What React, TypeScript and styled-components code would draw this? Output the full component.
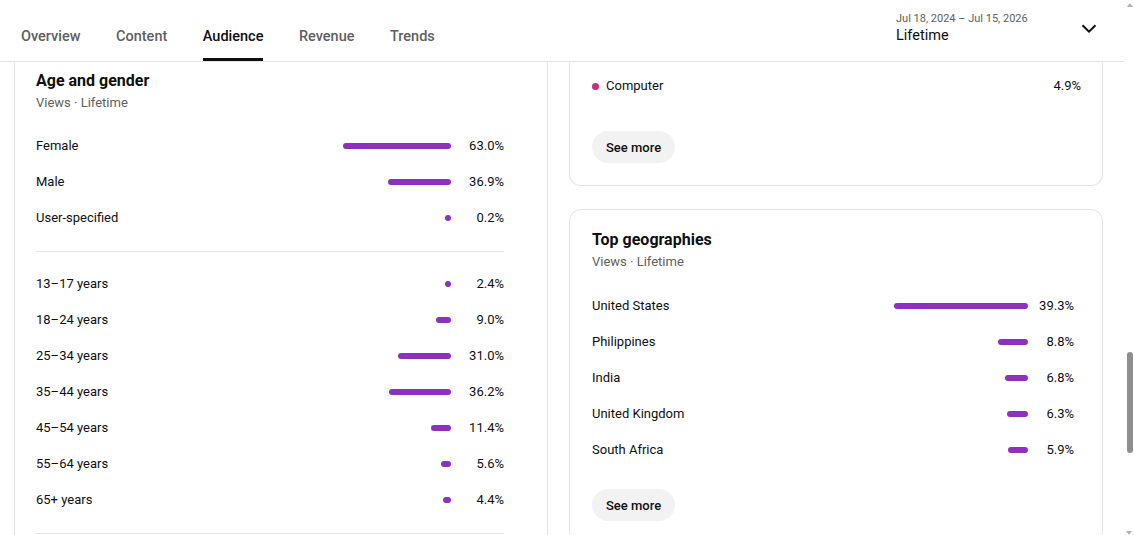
import { ReactElement } from 'react'
import styled, { createGlobalStyle } from 'styled-components'

type BarItem = { label: string; value: number }

const genderRows: BarItem[] = [
  { label: 'Female', value: 63.0 },
  { label: 'Male', value: 36.9 },
  { label: 'User-specified', value: 0.2 },
]

const ageRows: BarItem[] = [
  { label: '13–17 years', value: 2.4 },
  { label: '18–24 years', value: 9.0 },
  { label: '25–34 years', value: 31.0 },
  { label: '35–44 years', value: 36.2 },
  { label: '45–54 years', value: 11.4 },
  { label: '55–64 years', value: 5.6 },
  { label: '65+ years', value: 4.4 },
]

const geographyRows: BarItem[] = [
  { label: 'United States', value: 39.3 },
  { label: 'Philippines', value: 8.8 },
  { label: 'India', value: 6.8 },
  { label: 'United Kingdom', value: 6.3 },
  { label: 'South Africa', value: 5.9 },
]

const tabs = ['Overview', 'Content', 'Audience', 'Revenue', 'Trends']

const GlobalStyle = createGlobalStyle`
  html, body {
    margin: 0;
    height: 100%;
    overflow: hidden;
    background: #ffffff;
  }
  body {
    font-family: Roboto, "Noto Sans", Arial, sans-serif;
    color: #0f0f0f;
    -webkit-font-smoothing: antialiased;
  }
`

type BarListProps = {
  rows: BarItem[]
  scale: number
  valueWidth: number
  padding: string
}

function BarList({ rows, scale, valueWidth, padding }: BarListProps): ReactElement {
  return (
    <List $padding={padding}>
      {rows.map((row) => (
        <BarRow key={row.label} $valueWidth={valueWidth}>
          <RowLabel>{row.label}</RowLabel>
          <Bar style={{ width: Math.max(6, row.value * scale) }} />
          <RowValue>{row.value.toFixed(1)}%</RowValue>
        </BarRow>
      ))}
    </List>
  )
}

function App(): ReactElement {
  return (
    <Page>
      <GlobalStyle />
      <Main>
        <Header>
          <Tabs>
            {tabs.map((tab) => (
              <Tab key={tab} $active={tab === 'Audience'}>
                {tab}
              </Tab>
            ))}
          </Tabs>
          <DatePicker>
            <DateText>
              <DateRange>Jul 18, 2024 – Jul 15, 2026</DateRange>
              <DateLabel>Lifetime</DateLabel>
            </DateText>
            <svg width="24" height="24" viewBox="0 0 24 24" fill="none">
              <path d="M5.5 9.2l6.5 6.5 6.5-6.5" stroke="#0f0f0f" strokeWidth="2" />
            </svg>
          </DatePicker>
        </Header>

        <Content>
          <Card $cutTop $padding="8px 43px 40px 21px">
            <CardTitle>Age and gender</CardTitle>
            <CardSubtitle>Views · Lifetime</CardSubtitle>
            <BarList rows={genderRows} scale={1.714} valueWidth={53} padding="16px 0 15px" />
            <Divider />
            <BarList rows={ageRows} scale={1.714} valueWidth={53} padding="14px 0 15px" />
            <Divider />
          </Card>

          <Column>
            <Card $cutTop $padding="14px 21px 22px 22px">
              <LegendRow>
                <LegendDot $color="#c8307f" />
                <RowLabel>Computer</RowLabel>
                <LegendValue>4.9%</LegendValue>
              </LegendRow>
              <SeeMore type="button">See more</SeeMore>
            </Card>

            <Card $padding="19px 28px 22px 22px">
              <CardTitle>Top geographies</CardTitle>
              <CardSubtitle>Views · Lifetime</CardSubtitle>
              <BarList rows={geographyRows} scale={3.41} valueWidth={46} padding="17px 0 0" />
              <SeeMore type="button" $spaced>
                See more
              </SeeMore>
            </Card>
          </Column>
        </Content>
      </Main>

      <ScrollRail>
        <ScrollArrow $up />
        <ScrollTrack>
          <ScrollThumb />
        </ScrollTrack>
        <ScrollArrow />
      </ScrollRail>
    </Page>
  )
}

export default App

const Page = styled.div`
  display: flex;
  height: 100vh;
  overflow: hidden;
`

const Main = styled.div`
  flex: 1;
  min-width: 0;
  display: flex;
  flex-direction: column;
`

const Header = styled.header`
  height: 61px;
  flex-shrink: 0;
  display: flex;
  justify-content: space-between;
  border-bottom: 1px solid #e5e5e5;
  padding: 0 23px 0 21px;
`

const Tabs = styled.nav`
  display: flex;
  gap: 35.5px;
`

const Tab = styled.div<{ $active?: boolean }>`
  box-sizing: border-box;
  height: 61px;
  padding-top: 27px;
  font-size: 14.5px;
  line-height: 20px;
  font-weight: 500;
  color: ${(p) => (p.$active ? '#0f0f0f' : '#606060')};
  border-bottom: 3px solid ${(p) => (p.$active ? '#0f0f0f' : 'transparent')};
`

const DatePicker = styled.div`
  width: 205px;
  display: flex;
  justify-content: space-between;
  align-items: center;
  padding-bottom: 6px;
`

const DateText = styled.div`
  display: flex;
  flex-direction: column;
  padding-top: 2px;
`

const DateRange = styled.span`
  font-size: 11px;
  line-height: 15px;
  color: #606060;
`

const DateLabel = styled.span`
  font-size: 14.5px;
  line-height: 20px;
  color: #0f0f0f;
`

const Content = styled.main`
  flex: 1;
  overflow: hidden;
  display: grid;
  grid-template-columns: 534px 534px;
  align-items: start;
  gap: 21px;
  padding: 0 21px 0 14px;
`

const Column = styled.div`
  display: flex;
  flex-direction: column;
  gap: 23px;
`

const Card = styled.section<{ $cutTop?: boolean; $padding: string }>`
  box-sizing: border-box;
  border: 1px solid #e5e5e5;
  border-top: ${(p) => (p.$cutTop ? 'none' : '1px solid #e5e5e5')};
  border-radius: ${(p) => (p.$cutTop ? '0 0 12px 12px' : '12px')};
  padding: ${(p) => p.$padding};
  background: #ffffff;
`

const CardTitle = styled.h2`
  margin: 0;
  font-size: 16px;
  line-height: 22px;
  font-weight: 700;
  color: #0f0f0f;
`

const CardSubtitle = styled.div`
  margin-top: 2px;
  font-size: 13px;
  line-height: 18px;
  color: #606060;
`

const List = styled.div<{ $padding: string }>`
  display: flex;
  flex-direction: column;
  padding: ${(p) => p.$padding};
`

const BarRow = styled.div<{ $valueWidth: number }>`
  display: grid;
  grid-template-columns: 1fr auto ${(p) => p.$valueWidth}px;
  align-items: center;
  height: 36px;
`

const RowLabel = styled.span`
  font-size: 13px;
  line-height: 20px;
  color: #0f0f0f;
`

const Bar = styled.span`
  height: 6px;
  border-radius: 3px;
  background: #8e30bf;
`

const RowValue = styled.span`
  font-size: 13px;
  line-height: 20px;
  color: #0f0f0f;
  text-align: right;
`

const Divider = styled.hr`
  margin: 0;
  border: none;
  border-top: 1px solid #e5e5e5;
`

const LegendRow = styled.div`
  display: flex;
  align-items: center;
  gap: 7px;
  height: 20px;
`

const LegendDot = styled.span<{ $color: string }>`
  width: 7px;
  height: 7px;
  border-radius: 50%;
  background: ${(p) => p.$color};
`

const LegendValue = styled.span`
  margin-left: auto;
  font-size: 13px;
  line-height: 20px;
  color: #0f0f0f;
`

const SeeMore = styled.button<{ $spaced?: boolean }>`
  display: block;
  margin-top: ${(p) => (p.$spaced ? '21px' : '35px')};
  height: 32px;
  padding: 0 14px;
  border: none;
  border-radius: 16px;
  background: #f2f2f2;
  font-family: inherit;
  font-size: 13px;
  font-weight: 500;
  color: #0f0f0f;
`

const ScrollRail = styled.div`
  width: 10px;
  flex-shrink: 0;
  display: flex;
  flex-direction: column;
  align-items: center;
  background: #ffffff;
`

const ScrollArrow = styled.span<{ $up?: boolean }>`
  width: 0;
  height: 0;
  margin: ${(p) => (p.$up ? '3px' : '0 0 3px')} 0 0 2px;
  border-left: 3px solid transparent;
  border-right: 3px solid transparent;
  ${(p) => (p.$up ? 'border-bottom: 4px solid #b0b0b0;' : 'border-top: 4px solid #b0b0b0;')}
`

const ScrollTrack = styled.div`
  flex: 1;
  width: 100%;
  display: flex;
  justify-content: flex-end;
  padding-top: 345px;
`

const ScrollThumb = styled.span`
  width: 6px;
  height: 101px;
  margin-right: 1px;
  border-radius: 3px;
  background: #8f8f8f;
`
